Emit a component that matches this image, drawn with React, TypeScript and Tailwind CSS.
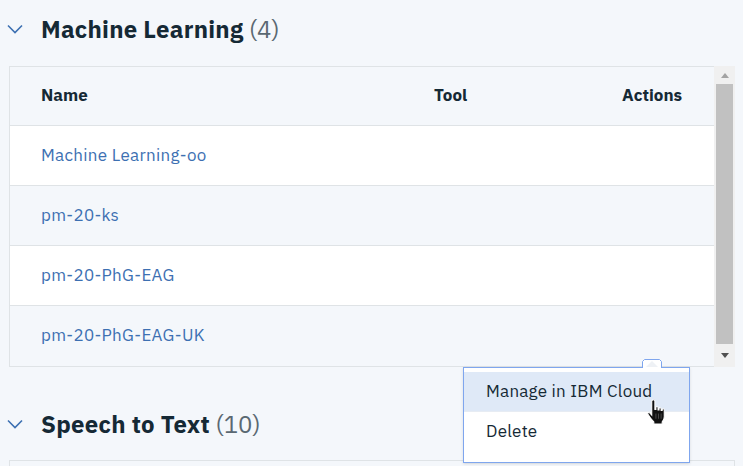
import React from "react";

const font = { fontFamily: '"IBM Plex Sans", "Noto Sans", "Open Sans", sans-serif' };

function Chevron() {
  return (
    <svg width="16" height="10" viewBox="0 0 16 10" className="shrink-0">
      <path d="M1 1.5 L8 8.5 L15 1.5" fill="none" stroke="#3d70b2" strokeWidth="1.6" />
    </svg>
  );
}

function SectionTitle({ title, count }: { title: string; count: string }) {
  return (
    <div className="flex items-center h-[58px] pl-[7px]">
      <Chevron />
      <div className="ml-[18px] text-[24px] leading-none tracking-[0.25px]">
        <span className="font-bold text-[#152935]">{title}</span>
        <span className="text-[#5a6872] font-normal tracking-normal"> {count}</span>
      </div>
    </div>
  );
}

const rows = ["Machine Learning-oo", "pm-20-ks", "pm-20-PhG-EAG", "pm-20-PhG-EAG-UK"];

export default function App() {
  return (
    <div className="relative w-[743px] h-[466px] overflow-hidden bg-[#f4f7fb]" style={font}>
      <SectionTitle title="Machine Learning" count="(4)" />
      <div className="flex ml-[9px] mt-[8px]">
        <div className="w-[705px] border border-[#dfe3e6] border-r-0">
          <div className="flex items-center h-[59px] border-b border-[#dfe3e6] text-[17px] font-bold text-[#152935]">
            <div className="w-[424px] pl-[31px]">Name</div>
            <div className="w-[188px]">Tool</div>
            <div className="flex-1">Actions</div>
          </div>
          {rows.map((r, i) => (
            <div
              key={r}
              className={`flex items-center h-[60px] text-[17px] tracking-[0.3px] text-[#3d70b2] ${i < rows.length - 1 ? "border-b border-[#dfe3e6]" : ""} ${i % 2 === 0 ? "bg-white" : "bg-[#f4f7fb]"}`}
            >
              <div className="pl-[31px]">{r}</div>
            </div>
          ))}
        </div>
        <div className="w-[21px] bg-[#f0f0f0] flex flex-col items-center">
          <div className="h-[18px] flex items-center justify-center">
            <svg width="8" height="5" viewBox="0 0 8 5"><path d="M0 5 L4 0 L8 5 Z" fill="#a3a3a3" /></svg>
          </div>
          <div className="w-[17px] h-[260px] bg-[#c1c1c1]" />
          <div className="flex-1 flex items-center justify-center">
            <svg width="8" height="5" viewBox="0 0 8 5"><path d="M0 0 L4 5 L8 0 Z" fill="#505050" /></svg>
          </div>
        </div>
      </div>
      <div className="h-[28px]" />
      <SectionTitle title="Speech to Text" count="(10)" />
      <div className="ml-[9px] mt-[7px] w-[726px] h-[20px] border border-[#dfe3e6] bg-[#f4f7fb]" />

      {/* Overflow menu */}
      <div className="absolute left-[463px] top-[367px] w-[227px] h-[96px] bg-white border border-[#7fa6ee] shadow-sm pt-[4px]">
        <div className="h-[40px] flex items-center pl-[22px] bg-[#dfe9f7] text-[17px] tracking-[0.25px] text-[#152935] border-b border-[#e7ecf3]">
          Manage in IBM Cloud
        </div>
        <div className="h-[40px] flex items-center pl-[22px] text-[17px] tracking-[0.25px] text-[#152935]">Delete</div>
      </div>
      <svg className="absolute left-[642px] top-[359px]" width="20" height="10" viewBox="0 0 20 10">
        <path d="M0.5 9 L0.5 2.5 L2.5 0.5 L17.5 0.5 L19.5 2.5 L19.5 9" fill="white" stroke="#7fa6ee" />
        <path d="M3 9 L10 2 L17 9 Z" fill="#eef1f5" />
        <rect x="1" y="8" width="18" height="3" fill="white" />
      </svg>
      {/* hand cursor */}
      <svg className="absolute left-[646px] top-[399px]" width="24" height="26" viewBox="0 0 22 25">
        <path
          d="M6 1 C6.8 0.5 8 0.8 8 2 L8 10 L9 10 L9 8 C9.5 7 11 7 11 8.5 L11 10.5 L12 10.5 L12 9 C12.5 8 14 8 14 9.5 L14 11 L15 11 L15 10 C15.5 9 17 9.2 17 10.5 L17 17 C17 19 16 21 15 22 L15 24 L7 24 L7 22 C5 20 2 16 1.2 14.5 C0.8 13.5 2 12.5 3 13.3 L5 15.5 L5 2 C5 1.6 5.4 1.2 6 1 Z"
          fill="#111"
          stroke="white"
          strokeWidth="1"
        />
        <path d="M9 14 L9 19 M11.5 14 L11.5 19 M14 14 L14 19" stroke="#555" strokeWidth="0.8" />
      </svg>
    </div>
  );
}
